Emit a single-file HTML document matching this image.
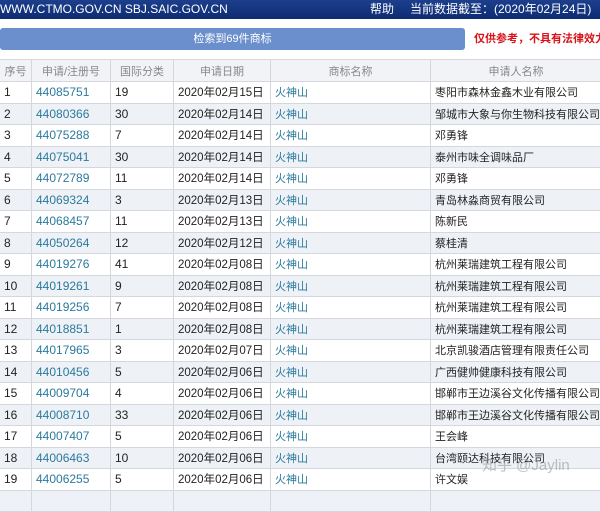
<!DOCTYPE html><html><head><meta charset="utf-8"><style>
body{margin:0;width:600px;height:494px;overflow:hidden;background:#fff;font-family:"Liberation Sans","Noto Sans CJK SC",sans-serif;font-size:12px;color:#222}
.top{position:absolute;left:0;top:0;width:600px;height:19px;background:linear-gradient(#1c3f8c,#0e2c72);color:#fff;font-size:12px;line-height:19px}
.btn{position:absolute;left:0;top:28px;width:465px;height:22px;background:#6a8fcc;border-radius:3px;color:#fff;text-align:center;line-height:22px;font-size:11px}
.warn{position:absolute;left:474px;top:28px;line-height:22px;color:#d8141a;font-weight:bold;font-size:11px;white-space:nowrap}
table{position:absolute;left:-1px;top:59px;border-collapse:collapse;width:602px;table-layout:fixed}
td,th{border:1px solid #d4d8de;height:20.5px;padding:0 0 0 4px;white-space:nowrap;overflow:hidden;font-weight:normal;text-align:left;vertical-align:middle}
td:last-child,td:nth-child(5){font-size:11px}
td:nth-child(4){font-size:11.5px}
th{background:#f1f3f6;color:#888;text-align:center;height:21px;padding:0;font-size:11px}
tr:nth-child(odd) td{background:#eef2f7}
.b{color:#2b7a9c}
</style></head><body>
<div class="top"><span style="position:absolute;left:0">WWW.CTMO.GOV.CN SBJ.SAIC.GOV.CN</span><span style="position:absolute;left:370px">帮助</span><span style="position:absolute;left:410px">当前数据截至：(2020年02月24日)</span></div>
<div class="btn">检索到69件商标</div>
<div class="warn">仅供参考，不具有法律效力</div>
<table>
<colgroup><col style="width:32px"><col style="width:79px"><col style="width:63px"><col style="width:97px"><col style="width:160px"><col style="width:171px"></colgroup>
<tr><th>序号</th><th>申请/注册号</th><th>国际分类</th><th>申请日期</th><th>商标名称</th><th>申请人名称</th></tr>
<tr><td>1</td><td class="b">44085751</td><td>19</td><td>2020年02月15日</td><td class="b">火神山</td><td>枣阳市森林金鑫木业有限公司</td></tr>
<tr><td>2</td><td class="b">44080366</td><td>30</td><td>2020年02月14日</td><td class="b">火神山</td><td>邹城市大象与你生物科技有限公司</td></tr>
<tr><td>3</td><td class="b">44075288</td><td>7</td><td>2020年02月14日</td><td class="b">火神山</td><td>邓勇锋</td></tr>
<tr><td>4</td><td class="b">44075041</td><td>30</td><td>2020年02月14日</td><td class="b">火神山</td><td>泰州市味全调味品厂</td></tr>
<tr><td>5</td><td class="b">44072789</td><td>11</td><td>2020年02月14日</td><td class="b">火神山</td><td>邓勇锋</td></tr>
<tr><td>6</td><td class="b">44069324</td><td>3</td><td>2020年02月13日</td><td class="b">火神山</td><td>青岛林淼商贸有限公司</td></tr>
<tr><td>7</td><td class="b">44068457</td><td>11</td><td>2020年02月13日</td><td class="b">火神山</td><td>陈新民</td></tr>
<tr><td>8</td><td class="b">44050264</td><td>12</td><td>2020年02月12日</td><td class="b">火神山</td><td>蔡桂清</td></tr>
<tr><td>9</td><td class="b">44019276</td><td>41</td><td>2020年02月08日</td><td class="b">火神山</td><td>杭州莱瑞建筑工程有限公司</td></tr>
<tr><td>10</td><td class="b">44019261</td><td>9</td><td>2020年02月08日</td><td class="b">火神山</td><td>杭州莱瑞建筑工程有限公司</td></tr>
<tr><td>11</td><td class="b">44019256</td><td>7</td><td>2020年02月08日</td><td class="b">火神山</td><td>杭州莱瑞建筑工程有限公司</td></tr>
<tr><td>12</td><td class="b">44018851</td><td>1</td><td>2020年02月08日</td><td class="b">火神山</td><td>杭州莱瑞建筑工程有限公司</td></tr>
<tr><td>13</td><td class="b">44017965</td><td>3</td><td>2020年02月07日</td><td class="b">火神山</td><td>北京凯骏酒店管理有限责任公司</td></tr>
<tr><td>14</td><td class="b">44010456</td><td>5</td><td>2020年02月06日</td><td class="b">火神山</td><td>广西健帅健康科技有限公司</td></tr>
<tr><td>15</td><td class="b">44009704</td><td>4</td><td>2020年02月06日</td><td class="b">火神山</td><td>邯郸市王边溪谷文化传播有限公司</td></tr>
<tr><td>16</td><td class="b">44008710</td><td>33</td><td>2020年02月06日</td><td class="b">火神山</td><td>邯郸市王边溪谷文化传播有限公司</td></tr>
<tr><td>17</td><td class="b">44007407</td><td>5</td><td>2020年02月06日</td><td class="b">火神山</td><td>王会峰</td></tr>
<tr><td>18</td><td class="b">44006463</td><td>10</td><td>2020年02月06日</td><td class="b">火神山</td><td>台湾颐达科技有限公司</td></tr>
<tr><td>19</td><td class="b">44006255</td><td>5</td><td>2020年02月06日</td><td class="b">火神山</td><td>许文娱</td></tr>
<tr><td>&nbsp;</td><td></td><td></td><td></td><td></td><td></td></tr>
</table>
<div style="position:absolute;left:482px;top:454px;color:rgba(150,150,150,.6);font-size:15px">知乎 @Jaylin</div>
</body></html>
